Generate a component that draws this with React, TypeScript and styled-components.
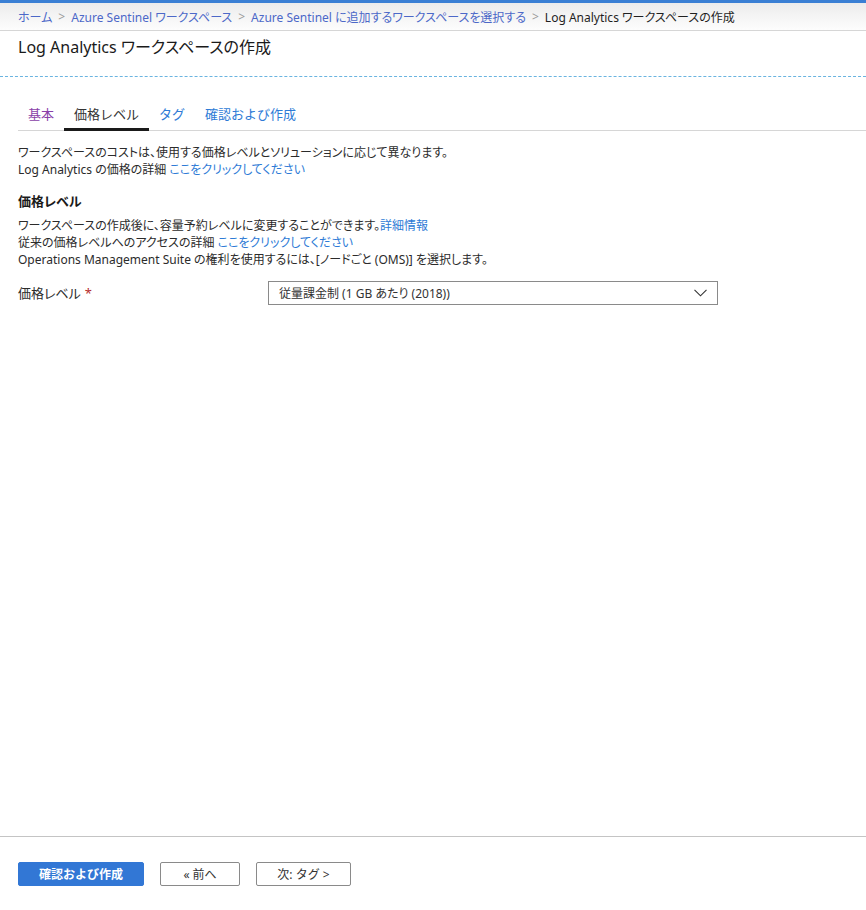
import React, { useState } from "react";
import styled, { createGlobalStyle } from "styled-components";

const GlobalStyle = createGlobalStyle`
  html, body {
    margin: 0;
    padding: 0;
    height: 100%;
    background: #ffffff;
  }
  body {
    font-family: "Noto Sans", "Noto Sans CJK JP", sans-serif;
    font-feature-settings: "palt";
    color: #2b2b2b;
  }
  #root {
    height: 100%;
  }
`;

const Page = styled.div`
  height: 100vh;
  display: flex;
  flex-direction: column;
  border-top: 3px solid #3a7fd4;
  box-sizing: border-box;
`;

const Breadcrumbs = styled.nav`
  height: 27px;
  display: flex;
  align-items: center;
  padding: 0 18px;
  font-size: 12px;
  background: linear-gradient(#ececec, #fdfdfd);
  border-bottom: 1px solid #d6d6d6;
`;

const Crumb = styled.a<{ current?: boolean }>`
  color: ${(p) => (p.current ? "#1f1f1f" : "#4c68c8")};
  text-decoration: none;
  cursor: ${(p) => (p.current ? "default" : "pointer")};
`;

const Sep = styled.span`
  color: #9a9a9a;
  margin: 0 6px;
  font-size: 12px;
`;

const TitleBar = styled.header`
  height: 46px;
  display: flex;
  align-items: flex-start;
  padding: 3px 18px 0;
  box-sizing: border-box;
  border-bottom: 1px dashed #6ab4e0;
`;

const Title = styled.h1`
  margin: 0;
  font-size: 16px;
  font-weight: 400;
  color: #1a1a1a;
`;

const Body = styled.main`
  flex: 1;
  padding: 0 0 0 18px;
`;

const TabBar = styled.div`
  display: flex;
  margin-top: 23px;
  border-bottom: 1px solid #d6d6d6;
`;

const Tab = styled.button<{ active?: boolean; visited?: boolean }>`
  background: none;
  border: none;
  font-family: inherit;
  font-size: 13px;
  padding: 4px 10px 5px;
  margin-bottom: -1px;
  border-bottom: 3px solid ${(p) => (p.active ? "#1a1a1a" : "transparent")};
  color: ${(p) => (p.active ? "#333333" : p.visited ? "#8a3fa8" : "#2e7bd6")};
  cursor: pointer;
`;

const Section = styled.section`
  padding-top: 13px;
  font-size: 12px;
  line-height: 17px;
  color: #2b2b2b;
`;

const Line = styled.div``;

const Link = styled.a`
  color: #2e7bd6;
  text-decoration: none;
  cursor: pointer;
`;

const Heading = styled.h2`
  margin: 14px 0 7px;
  font-size: 13px;
  font-weight: 700;
  color: #1a1a1a;
  line-height: 18px;
`;

const FieldRow = styled.div`
  display: grid;
  grid-template-columns: 250px 450px;
  align-items: center;
  margin-top: 13px;
  font-size: 13px;
`;

const Label = styled.label`
  color: #2b2b2b;
`;

const Required = styled.span`
  color: #b52b2b;
  margin-left: 4px;
`;

const Select = styled.div`
  height: 24px;
  box-sizing: border-box;
  border: 1px solid #8a8a8a;
  display: flex;
  align-items: center;
  justify-content: space-between;
  padding: 0 10px 0 10px;
  font-size: 12px;
  color: #333;
  cursor: pointer;
`;

const Footer = styled.footer`
  border-top: 1px solid #c4c4c4;
  padding: 25px 18px 24px;
  display: flex;
  gap: 16px;
`;

const Button = styled.button<{ primary?: boolean; width: number }>`
  width: ${(p) => p.width}px;
  height: 24px;
  box-sizing: border-box;
  font-family: inherit;
  font-size: 12px;
  border-radius: 2px;
  cursor: pointer;
  background: ${(p) => (p.primary ? "#3277d5" : "#ffffff")};
  color: ${(p) => (p.primary ? "#ffffff" : "#333333")};
  font-weight: ${(p) => (p.primary ? 700 : 400)};
  border: 1px solid ${(p) => (p.primary ? "#3277d5" : "#8a8a8a")};
`;

const tabs = ["基本", "価格レベル", "タグ", "確認および作成"];

const App: React.FC = () => {
  const [active, setActive] = useState(1);

  return (
    <>
      <GlobalStyle />
      <Page>
        <Breadcrumbs>
          <Crumb>ホーム</Crumb>
          <Sep>&gt;</Sep>
          <Crumb>Azure Sentinel ワークスペース</Crumb>
          <Sep>&gt;</Sep>
          <Crumb>Azure Sentinel に追加するワークスペースを選択する</Crumb>
          <Sep>&gt;</Sep>
          <Crumb current>Log Analytics ワークスペースの作成</Crumb>
        </Breadcrumbs>
        <TitleBar>
          <Title>Log Analytics ワークスペースの作成</Title>
        </TitleBar>
        <Body>
          <TabBar>
            {tabs.map((t, i) => (
              <Tab
                key={t}
                active={i === active}
                visited={i < active}
                onClick={() => setActive(i)}
              >
                {t}
              </Tab>
            ))}
          </TabBar>
          <Section>
            <Line>ワークスペースのコストは、使用する価格レベルとソリューションに応じて異なります。</Line>
            <Line>
              Log Analytics の価格の詳細 <Link>ここをクリックしてください</Link>
            </Line>
            <Heading>価格レベル</Heading>
            <Line>
              ワークスペースの作成後に、容量予約レベルに変更することができます。<Link>詳細情報</Link>
            </Line>
            <Line>
              従来の価格レベルへのアクセスの詳細 <Link>ここをクリックしてください</Link>
            </Line>
            <Line>
              Operations Management Suite の権利を使用するには、[ノードごと (OMS)] を選択します。
            </Line>
            <FieldRow>
              <Label>
                価格レベル<Required>*</Required>
              </Label>
              <Select>
                <span>従量課金制 (1 GB あたり (2018))</span>
                <svg width="13" height="8" viewBox="0 0 13 8">
                  <path d="M0.5 0.8 L6.5 6.8 L12.5 0.8" fill="none" stroke="#333" strokeWidth="1.1" />
                </svg>
              </Select>
            </FieldRow>
          </Section>
        </Body>
        <Footer>
          <Button primary width={126}>確認および作成</Button>
          <Button width={80}>« 前へ</Button>
          <Button width={95}>次: タグ &gt;</Button>
        </Footer>
      </Page>
    </>
  );
};

export default App;
